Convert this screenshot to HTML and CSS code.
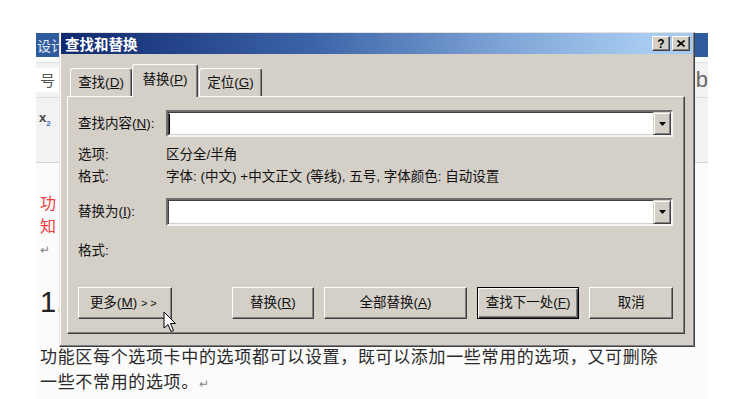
FILE: index.html
```html
<!DOCTYPE html>
<html lang="zh-CN">
<head>
<meta charset="utf-8">
<title>查找和替换</title>
<link rel="stylesheet" href="styles.css">
</head>
<body>
<div class="word">
  <div class="w-titlebar"><span class="w-tabname">设计</span></div>
  <div class="w-ribbon">
    <div class="w-strip"></div>
    <div class="w-row1"><span class="w-size">号</span><span class="w-styles">b</span></div>
    <div class="w-row2"><span class="w-sub">x<sub>2</sub></span></div>
  </div>
  <div class="w-doc">
    <p class="red">功</p>
    <p class="red">知</p>
    <p class="ret">↵</p>
    <p class="big">1.</p>
    <p class="para">功能区每个选项卡中的选项都可以设置，既可以添加一些常用的选项，又可删除<br>一些不常用的选项。<span class="ret-s">↵</span></p>
  </div>
</div>

<div class="dialog">
  <div class="titlebar">
    <span class="title">查找和替换</span>
    <span class="tbtn">?</span>
    <span class="tbtn"><svg width="8" height="7" viewBox="0 0 8 7"><path d="M0.5 0.5 L7.5 6.5 M7.5 0.5 L0.5 6.5" stroke="#000" stroke-width="1.6"/></svg></span>
  </div>
  <div class="tabs">
    <div class="tab t1">查找(<u>D</u>)</div>
    <div class="tab t2 active">替换(<u>P</u>)</div>
    <div class="tab t3">定位(<u>G</u>)</div>
  </div>
  <div class="panel">
    <div class="row r-find">
      <span class="label">查找内容(<u>N</u>):</span>
      <div class="combo"><span class="caret"></span><span class="drop"><svg width="7" height="4" viewBox="0 0 7 4"><path d="M0 0 H7 L3.5 4 Z" fill="#000"/></svg></span></div>
    </div>
    <div class="row r-info r-opt">
      <span class="label">选项:</span><span class="val">区分全/半角</span>
    </div>
    <div class="row r-info">
      <span class="label">格式:</span><span class="val">字体: (中文) +中文正文 (等线), 五号, 字体颜色: 自动设置</span>
    </div>
    <div class="row r-repl">
      <span class="label">替换为(<u>I</u>):</span>
      <div class="combo"><span class="nocaret"></span><span class="drop"><svg width="7" height="4" viewBox="0 0 7 4"><path d="M0 0 H7 L3.5 4 Z" fill="#000"/></svg></span></div>
    </div>
    <div class="row r-info r-fmt2">
      <span class="label">格式:</span>
    </div>
    <div class="buttons">
      <span class="btn b-more">更多(<u>M</u>) <span class="gt">&gt;&gt;</span></span>
      <span class="btn b-repl">替换(<u>R</u>)</span>
      <span class="btn b-all">全部替换(<u>A</u>)</span>
      <span class="btn b-next default">查找下一处(<u>F</u>)</span>
      <span class="btn b-cancel">取消</span>
    </div>
  </div>
</div>

<svg class="cursor" width="14" height="22" viewBox="0 0 14 22"><path d="M1 1 L1 17 L5 13.5 L8 20.5 L10.5 19.5 L7.5 12.5 L12.5 12.5 Z" fill="#fff" stroke="#000" stroke-width="1" stroke-linejoin="round"/></svg>
</body>
</html>
```
FILE: styles.css
```css
html { background: #fff; }
body {
  margin: 0;
  padding: 33px 0 0 36px;
  width: 750px;
  height: 399px;
  box-sizing: border-box;
  position: relative;
  overflow: hidden;
  background: #fff;
  font-family: "Liberation Sans", "Noto Sans CJK SC", sans-serif;
}

/* background Word window */
.word {
  width: 672px;
  height: 366px;
  display: flex;
  flex-direction: column;
  overflow: hidden;
}
.w-titlebar {
  height: 24px;
  flex: none;
  background: #2f5c9f;
  color: #e6ecf6;
  font: 14px/24px "Noto Sans CJK SC", sans-serif;
  padding-left: 1px;
}
.w-ribbon {
  height: 106px;
  flex: none;
  box-sizing: border-box;
  background: #f2f2f2;
  border-bottom: 1px solid #d4d4d4;
  display: flex;
  flex-direction: column;
}
.w-strip {
  height: 5px;
  background: #fafafa;
  border-bottom: 1px solid #e0e0e0;
}
.w-row1 {
  height: 35px;
  box-sizing: border-box;
  border-bottom: 1px solid #dadada;
  display: flex;
  justify-content: space-between;
  align-items: center;
}
.w-size {
  height: 24px;
  padding: 0 4px;
  background: #fff;
  font: 15px/24px "Noto Sans CJK SC", sans-serif;
  color: #555;
}
.w-styles {
  font: 22px/28px "Liberation Sans", sans-serif;
  color: #666;
}
.w-row2 {
  padding: 10px 0 0 3px;
}
.w-sub {
  font: bold 13px/18px "Liberation Sans", sans-serif;
  color: #444;
}
.w-sub sub { font-size: 8px; color: #3a6fc4; }
.w-doc {
  flex: 1;
  background: #fbfbfb;
  padding: 28px 0 0 4px;
  font-family: "Noto Sans CJK SC", sans-serif;
}
.w-doc p { margin: 0; }
.red { color: #f03c3c; font-size: 16px; line-height: 23px; }
.ret { color: #888; font-size: 12px; line-height: 23px; }
.big {
  margin-top: 22px !important;
  font: 29px/40px "Liberation Sans", sans-serif;
  color: #222;
}
.para {
  margin-top: 21px !important;
  font-size: 17px;
  line-height: 25px;
  letter-spacing: 0.66px;
  color: #2a2a2a;
  white-space: nowrap;
}
.ret-s { color: #888; font-size: 12px; }

/* dialog */
.dialog {
  position: absolute;
  left: 59px;
  top: 32px;
  width: 636px;
  height: 315px;
  box-sizing: border-box;
  background: #d4d0c8;
  border: 1px solid;
  border-color: #e6e3de #404040 #404040 #e6e3de;
  box-shadow: inset -1px -1px #808080, inset 1px 1px #fff;
  display: flex;
  flex-direction: column;
  color: #111;
  font-size: 13.5px;
}
.titlebar {
  height: 21px;
  margin: 0 1px;
  padding: 0 3px 0 4px;
  background: linear-gradient(90deg, #10296f 0%, #3d64a8 40%, #7ea4d6 70%, #a6caf0 92%, #a6caf0 100%);
  display: flex;
  align-items: center;
  gap: 2px;
}
.title {
  flex: 1;
  color: #fff;
  font: bold 14.5px/21px "Noto Sans CJK SC", sans-serif;
}
.tbtn {
  width: 18px;
  height: 15px;
  box-sizing: border-box;
  background: #d4d0c8;
  border: 1px solid;
  border-color: #fff #404040 #404040 #fff;
  box-shadow: inset -1px -1px #808080;
  display: flex;
  align-items: center;
  justify-content: center;
  font: bold 12px/12px "Liberation Sans", sans-serif;
  color: #000;
}

.tabs {
  margin-top: 10px;
  height: 32px;
  padding-left: 10px;
  display: flex;
  align-items: flex-end;
}
.tab {
  height: 28px;
  box-sizing: border-box;
  background: #d4d0c8;
  border-top: 1px solid #fff;
  border-left: 1px solid #fff;
  border-right: 1px solid #404040;
  box-shadow: inset -1px 0 #808080;
  border-radius: 3px 3px 0 0;
  display: flex;
  align-items: center;
  justify-content: center;
  line-height: 16px;
}
.t1 { width: 62px; }
.t2 { width: 66px; }
.t3 { width: 63px; margin-left: 1px; }
.tab.active {
  height: 33px;
  margin-bottom: -1px;
  padding-bottom: 2px;
  position: relative;
  z-index: 1;
}

.panel {
  margin-left: 7px;
  width: 618px;
  height: 238px;
  box-sizing: border-box;
  border: 1px solid;
  border-color: #fff #404040 #404040 #fff;
  box-shadow: inset -1px -1px #808080;
  padding: 13px 11px 0 10px;
  display: flex;
  flex-direction: column;
}
.row {
  display: flex;
  align-items: center;
}
.label {
  width: 88px;
  flex: none;
  line-height: 18px;
}
.val { line-height: 18px; white-space: nowrap; }
.r-find { height: 27px; }
.r-info { height: 22px; }
.r-opt { margin-top: 7px; }
.r-repl { height: 28px; margin-top: 10px; }
.r-fmt2 { margin-top: 14px; }
.combo {
  flex: 1;
  height: 100%;
  box-sizing: border-box;
  background: #fff;
  border: 2px solid;
  border-color: #6e6e6e #f4f4f4 #f4f4f4 #6e6e6e;
  box-shadow: inset 1px 1px #404040, inset -1px -1px #d4d0c8;
  display: flex;
  justify-content: space-between;
  align-items: center;
}
.caret {
  width: 1px;
  height: 20px;
  margin-left: 1px;
  background: #000;
}
.nocaret { width: 1px; }
.drop {
  width: 18px;
  height: 100%;
  box-sizing: border-box;
  background: #d4d0c8;
  border: 1px solid;
  border-color: #d4d0c8 #404040 #404040 #d4d0c8;
  box-shadow: inset 1px 1px #fff, inset -1px -1px #808080;
  display: flex;
  align-items: center;
  justify-content: center;
}

.buttons {
  margin-top: 25px;
  height: 32px;
  display: flex;
  gap: 10px;
}
.btn {
  height: 32px;
  box-sizing: border-box;
  background: #d4d0c8;
  border: 1px solid;
  border-color: #fff #404040 #404040 #fff;
  box-shadow: inset -1px -1px #808080;
  display: flex;
  align-items: center;
  justify-content: center;
  line-height: 16px;
  white-space: pre;
}
.btn.default {
  border-color: #000;
  box-shadow: inset 1px 1px #fff, inset -1px -1px #404040, inset -2px -2px #808080;
}
.b-more { width: 94px; }
.b-repl { width: 83px; margin-left: 50px; }
.b-all { width: 143px; }
.b-next { width: 103px; }
.b-cancel { width: 84px; }
.gt { letter-spacing: 3px; font-size: 11px; }

.cursor {
  position: absolute;
  left: 163px;
  top: 311px;
}
```
